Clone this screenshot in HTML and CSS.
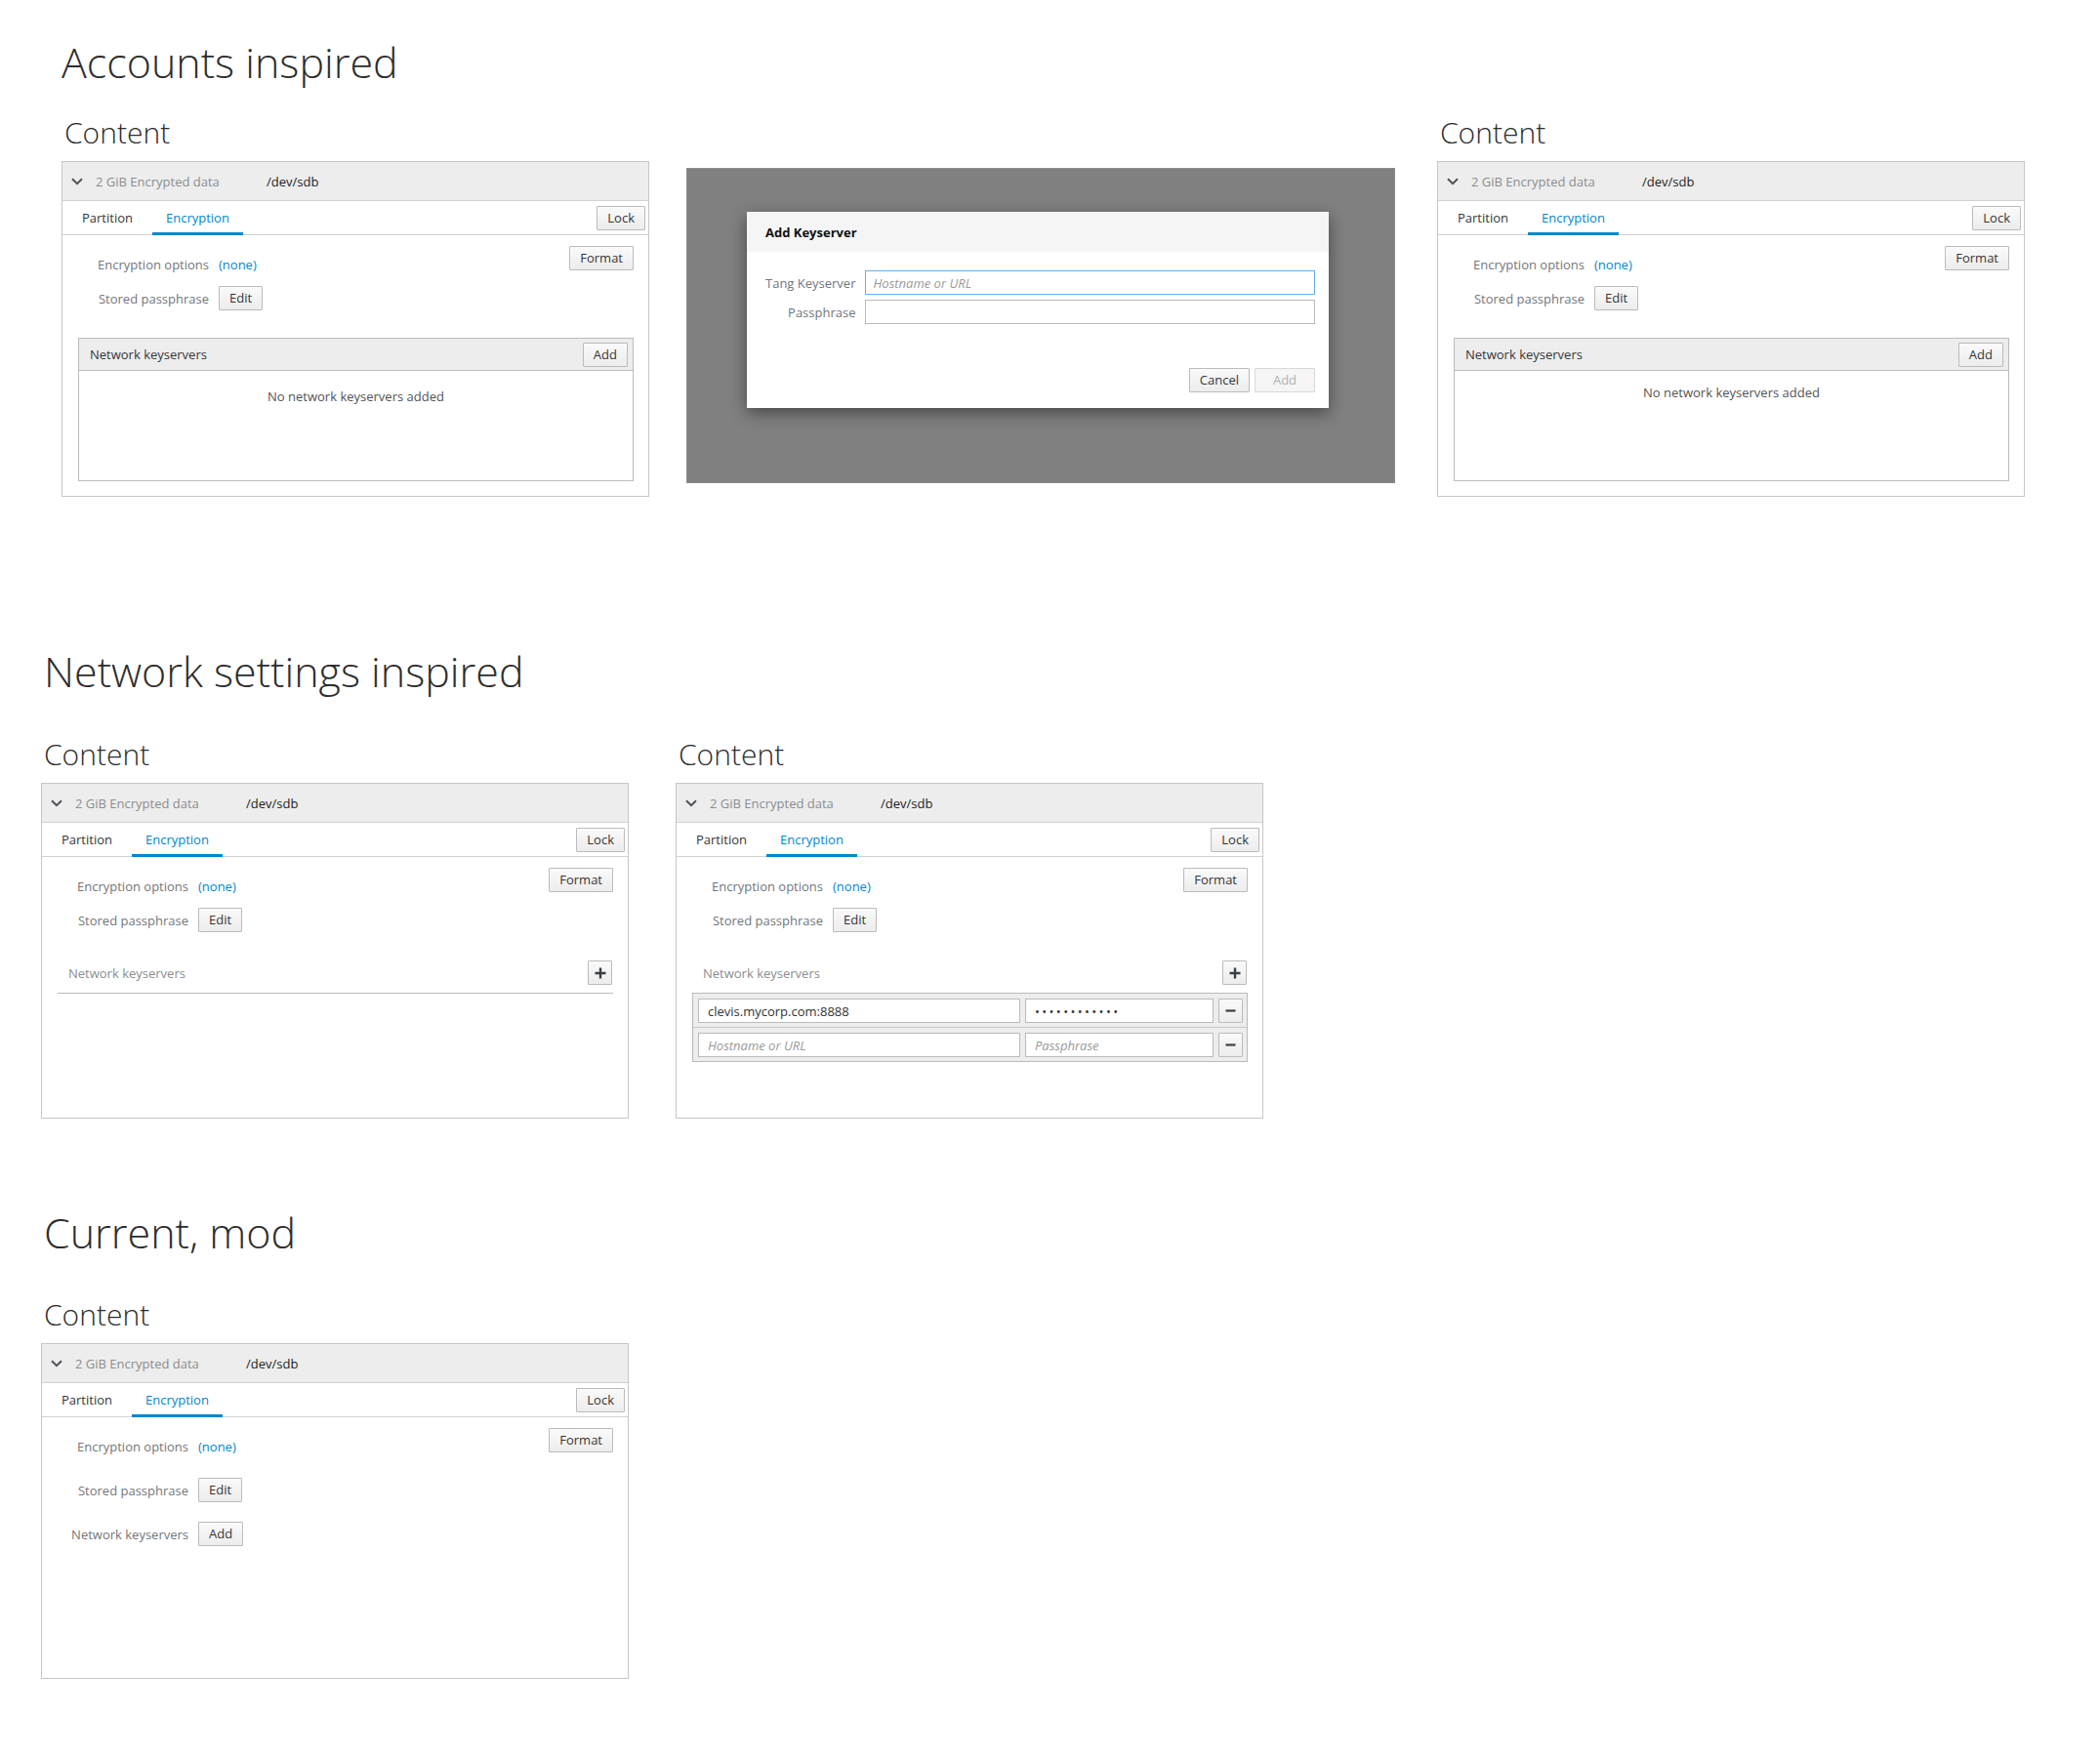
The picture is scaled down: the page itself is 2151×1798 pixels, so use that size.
FILE: index.html
```html
<!DOCTYPE html>
<html lang="en">
<head>
<meta charset="utf-8">
<title>Network keyservers mockups</title>
<link rel="stylesheet" href="styles.css">
</head>
<body>

<section class="sec sec-accounts">
  <h1 class="sec-title">Accounts inspired</h1>
  <div class="sec-row">
    <div class="col">
      <h2 class="col-title">Content</h2>
      <div class="card">
        <div class="card-head">
          <svg class="chev" width="12" height="8" viewBox="0 0 12 8"><polyline points="1,1.2 6,6.2 11,1.2" fill="none" stroke="#4d5258" stroke-width="2"/></svg>
          <span class="dev-name">2 GiB Encrypted data</span>
          <span class="dev-path">/dev/sdb</span>
        </div>
        <div class="card-tabs">
          <div class="tabs"><span class="tab">Partition</span><span class="tab active">Encryption</span></div>
          <button class="btn">Lock</button>
        </div>
        <div class="card-body">
          <div class="body-top">
            <div class="props">
              <span class="lbl">Encryption options</span><span class="link">(none)</span>
              <span class="lbl">Stored passphrase</span><span><button class="btn">Edit</button></span>
            </div>
            <button class="btn">Format</button>
          </div>
          <div class="panel">
            <div class="panel-head"><span>Network keyservers</span><button class="btn">Add</button></div>
            <div class="panel-empty">No network keyservers added</div>
          </div>
        </div>
      </div>
    </div>

    <div class="overlay">
      <div class="dialog">
        <div class="dlg-head">Add Keyserver</div>
        <div class="dlg-form">
          <label class="dlg-lbl">Tang Keyserver</label><input class="inp inp-focus" placeholder="Hostname or URL">
          <label class="dlg-lbl">Passphrase</label><input class="inp">
        </div>
        <div class="dlg-foot">
          <button class="btn btn-wide">Cancel</button>
          <button class="btn btn-wide btn-disabled">Add</button>
        </div>
      </div>
    </div>

    <div class="col col-right">
      <h2 class="col-title">Content</h2>
      <div class="card">
        <div class="card-head">
          <svg class="chev" width="12" height="8" viewBox="0 0 12 8"><polyline points="1,1.2 6,6.2 11,1.2" fill="none" stroke="#4d5258" stroke-width="2"/></svg>
          <span class="dev-name">2 GiB Encrypted data</span>
          <span class="dev-path">/dev/sdb</span>
        </div>
        <div class="card-tabs">
          <div class="tabs"><span class="tab">Partition</span><span class="tab active">Encryption</span></div>
          <button class="btn">Lock</button>
        </div>
        <div class="card-body">
          <div class="body-top">
            <div class="props">
              <span class="lbl">Encryption options</span><span class="link">(none)</span>
              <span class="lbl">Stored passphrase</span><span><button class="btn">Edit</button></span>
            </div>
            <button class="btn">Format</button>
          </div>
          <div class="panel">
            <div class="panel-head"><span>Network keyservers</span><button class="btn">Add</button></div>
            <div class="panel-empty panel-empty-tight">No network keyservers added</div>
          </div>
        </div>
      </div>
    </div>
  </div>
</section>

<section class="sec sec-network">
  <h1 class="sec-title">Network settings inspired</h1>
  <div class="sec-row">
    <div class="col">
      <h2 class="col-title">Content</h2>
      <div class="card">
        <div class="card-head">
          <svg class="chev" width="12" height="8" viewBox="0 0 12 8"><polyline points="1,1.2 6,6.2 11,1.2" fill="none" stroke="#4d5258" stroke-width="2"/></svg>
          <span class="dev-name">2 GiB Encrypted data</span>
          <span class="dev-path">/dev/sdb</span>
        </div>
        <div class="card-tabs">
          <div class="tabs"><span class="tab">Partition</span><span class="tab active">Encryption</span></div>
          <button class="btn">Lock</button>
        </div>
        <div class="card-body">
          <div class="body-top">
            <div class="props">
              <span class="lbl">Encryption options</span><span class="link">(none)</span>
              <span class="lbl">Stored passphrase</span><span><button class="btn">Edit</button></span>
            </div>
            <button class="btn">Format</button>
          </div>
          <div class="ks-head">
            <span class="ks-title">Network keyservers</span>
            <button class="btn btn-icon" aria-label="Add"><svg width="12" height="12" viewBox="0 0 12 12"><path d="M6 0.5V11.5M0.5 6H11.5" stroke="#393f44" stroke-width="2.4"/></svg></button>
          </div>
        </div>
      </div>
    </div>

    <div class="col">
      <h2 class="col-title">Content</h2>
      <div class="card">
        <div class="card-head">
          <svg class="chev" width="12" height="8" viewBox="0 0 12 8"><polyline points="1,1.2 6,6.2 11,1.2" fill="none" stroke="#4d5258" stroke-width="2"/></svg>
          <span class="dev-name">2 GiB Encrypted data</span>
          <span class="dev-path">/dev/sdb</span>
        </div>
        <div class="card-tabs">
          <div class="tabs"><span class="tab">Partition</span><span class="tab active">Encryption</span></div>
          <button class="btn">Lock</button>
        </div>
        <div class="card-body">
          <div class="body-top">
            <div class="props">
              <span class="lbl">Encryption options</span><span class="link">(none)</span>
              <span class="lbl">Stored passphrase</span><span><button class="btn">Edit</button></span>
            </div>
            <button class="btn">Format</button>
          </div>
          <div class="ks-head ks-head-open">
            <span class="ks-title">Network keyservers</span>
            <button class="btn btn-icon" aria-label="Add"><svg width="12" height="12" viewBox="0 0 12 12"><path d="M6 0.5V11.5M0.5 6H11.5" stroke="#393f44" stroke-width="2.4"/></svg></button>
          </div>
          <div class="ks-list">
            <div class="ks-row">
              <input class="inp ks-host" value="clevis.mycorp.com:8888">
              <input class="inp ks-pass ks-dots" value="••••••••••••">
              <button class="btn btn-icon" aria-label="Remove"><svg width="11" height="11" viewBox="0 0 11 11"><path d="M0.5 5.5H10.5" stroke="#393f44" stroke-width="2.2"/></svg></button>
            </div>
            <div class="ks-row">
              <input class="inp ks-host" placeholder="Hostname or URL">
              <input class="inp ks-pass" placeholder="Passphrase">
              <button class="btn btn-icon" aria-label="Remove"><svg width="11" height="11" viewBox="0 0 11 11"><path d="M0.5 5.5H10.5" stroke="#393f44" stroke-width="2.2"/></svg></button>
            </div>
          </div>
        </div>
      </div>
    </div>
  </div>
</section>

<section class="sec sec-current">
  <h1 class="sec-title">Current, mod</h1>
  <div class="sec-row">
    <div class="col">
      <h2 class="col-title">Content</h2>
      <div class="card">
        <div class="card-head">
          <svg class="chev" width="12" height="8" viewBox="0 0 12 8"><polyline points="1,1.2 6,6.2 11,1.2" fill="none" stroke="#4d5258" stroke-width="2"/></svg>
          <span class="dev-name">2 GiB Encrypted data</span>
          <span class="dev-path">/dev/sdb</span>
        </div>
        <div class="card-tabs">
          <div class="tabs"><span class="tab">Partition</span><span class="tab active">Encryption</span></div>
          <button class="btn">Lock</button>
        </div>
        <div class="card-body">
          <div class="body-top">
            <div class="props props-loose">
              <span class="lbl">Encryption options</span><span class="link">(none)</span>
              <span class="lbl">Stored passphrase</span><span><button class="btn">Edit</button></span>
              <span class="lbl">Network keyservers</span><span><button class="btn">Add</button></span>
            </div>
            <button class="btn">Format</button>
          </div>
        </div>
      </div>
    </div>
  </div>
</section>

</body>
</html>
```

FILE: styles.css
```css
* { box-sizing: border-box; }

body {
  margin: 0;
  background: #fff;
  font-family: "Open Sans", "Liberation Sans", sans-serif;
  font-size: 13px;
  color: #363636;
}

/* sections */
.sec { padding-left: 42px; }
.sec-accounts { padding-left: 63px; padding-top: 42px; }
.sec-network { margin-top: 157px; }
.sec-current { margin-top: 95px; padding-bottom: 80px; }

.sec-title {
  margin: 0 0 48px;
  padding-left: 3px;
  font-size: 43px;
  font-weight: 300;
  line-height: 1;
  color: #2d2d2d;
}
.sec-accounts .sec-title { margin-bottom: 35px; padding-left: 0; }
.sec-current .sec-title { margin-bottom: 47px; }

.sec-row { display: flex; align-items: flex-start; gap: 48px; }
.sec-accounts .sec-row { gap: 38px; }
.col-right { margin-left: 5px; }

.col-title {
  margin: 1px 0 14px;
  padding-left: 3px;
  font-size: 30px;
  font-weight: 300;
  line-height: 1;
  color: #2d2d2d;
}

/* card */
.card {
  width: 602px;
  height: 344px;
  border: 1px solid #c6c6c6;
  background: #fff;
  display: flex;
  flex-direction: column;
}

.card-head {
  height: 40px;
  flex: none;
  display: flex;
  align-items: center;
  padding-left: 9px;
  background: #ededed;
  border-bottom: 1px solid #d1d1d1;
}
.chev { flex: none; margin-top: 1px; }
.dev-name { width: 175px; margin-left: 13px; color: #8b8d8f; }
.dev-path { color: #222; }

.card-tabs {
  height: 35px;
  flex: none;
  display: flex;
  align-items: center;
  justify-content: space-between;
  padding: 0 3px 0 6px;
  border-bottom: 1px solid #d1d1d1;
}
.tabs { display: flex; align-self: stretch; gap: 6px; }
.tab {
  display: flex;
  align-items: center;
  padding: 2px 14px 0;
  margin-bottom: -1px;
  border-bottom: 3px solid transparent;
  color: #363636;
}
.tab.active { color: #0088ce; border-bottom-color: #0088ce; }

.card-body {
  flex: 1;
  display: flex;
  flex-direction: column;
  padding: 11px 15px 15px 16px;
}
.body-top { display: flex; justify-content: space-between; align-items: flex-start; }

.props {
  display: grid;
  grid-template-columns: 134px auto;
  grid-auto-rows: 25px;
  column-gap: 10px;
  row-gap: 10px;
  align-items: center;
  padding-top: 6px;
}
.props-loose { row-gap: 20px; }
.lbl { text-align: right; color: #72767b; white-space: nowrap; }
.link { color: #0088ce; }

/* buttons */
.btn {
  height: 25px;
  padding: 0 10px;
  font-family: inherit;
  font-size: 13px;
  line-height: 23px;
  color: #363636;
  background: linear-gradient(#fafafa, #ececec);
  border: 1px solid #bbb;
  border-radius: 1px;
}
.btn-wide { min-width: 62px; }
.btn-disabled { color: #b0b0b0; background: #f5f5f5; border-color: #d8d8d8; }
.btn-icon {
  width: 25px;
  padding: 0;
  display: flex;
  align-items: center;
  justify-content: center;
}

/* accounts panel */
.panel {
  flex: 1;
  margin-top: 28px;
  border: 1px solid #bbb;
  display: flex;
  flex-direction: column;
}
.panel-head {
  height: 33px;
  display: flex;
  align-items: center;
  justify-content: space-between;
  padding: 0 5px 0 11px;
  background: #ededed;
  border-bottom: 1px solid #bbb;
  color: #363636;
}
.panel-empty { padding-top: 17px; line-height: 18px; text-align: center; color: #545454; }
.panel-empty-tight { padding-top: 13px; }

/* network-settings keyservers */
.ks-head {
  margin-top: 28px;
  display: flex;
  align-items: center;
  justify-content: space-between;
  padding: 1px 1px 8px 11px;
  border-bottom: 1px solid #bbb;
}
.ks-head-open { border-bottom: none; }
.ks-title { color: #8b8d8f; }

.ks-list { border: 1px solid #bbb; background: #ededed; }
.ks-row {
  display: flex;
  gap: 5px;
  padding: 5px 4px 4px 5px;
}
.ks-row + .ks-row { border-top: 1px solid #c8c8c8; }
.ks-host { flex: 1; min-width: 0; }
.ks-pass { width: 193px; flex: none; }
.ks-dots { font-size: 12.5px; letter-spacing: 2.4px; color: #222; }

/* inputs */
.inp {
  height: 25px;
  padding: 0 9px;
  font-family: inherit;
  font-size: 13px;
  color: #333;
  background: #fff;
  border: 1px solid #bbb;
  border-radius: 0;
  outline: none;
}
.inp::placeholder { color: #999; font-style: italic; }
.inp-focus { border-color: #66afe9; padding-left: 7px; }

/* dialog demo */
.overlay {
  width: 726px;
  height: 323px;
  margin-top: 52px;
  padding: 44px 0 0 61px;
  background: #808080;
  border: 1px solid #8c8c8c;
}
.dialog {
  width: 596px;
  height: 201px;
  background: #fff;
  box-shadow: 0 5px 16px rgba(0, 0, 0, 0.45);
  display: flex;
  flex-direction: column;
}
.dlg-head {
  height: 41px;
  display: flex;
  align-items: center;
  padding-left: 19px;
  background: #f5f5f5;
  font-weight: 700;
  color: #111;
}
.dlg-form {
  display: grid;
  grid-template-columns: auto 1fr;
  column-gap: 10px;
  row-gap: 5px;
  align-items: center;
  padding: 19px 14px 0 19px;
}
.dlg-lbl { text-align: right; color: #72767b; }
.dlg-foot {
  display: flex;
  justify-content: flex-end;
  gap: 5px;
  margin-top: 45px;
  padding-right: 14px;
}
```
